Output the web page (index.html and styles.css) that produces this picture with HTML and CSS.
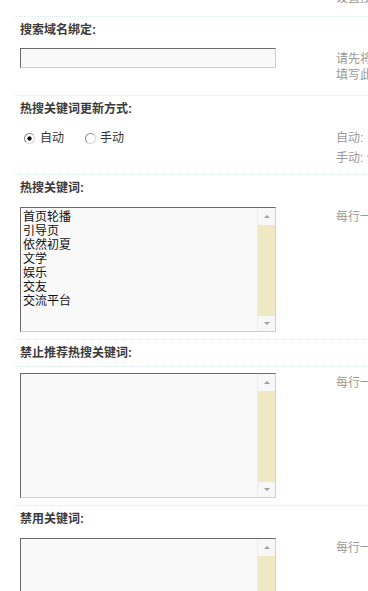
FILE: index.html
```html
<!DOCTYPE html>
<html lang="zh-CN">
<head>
<meta charset="utf-8">
<title>搜索设置</title>
<link rel="stylesheet" href="styles.css">
</head>
<body>
<div class="panel">
  <div class="row row-first">
    <div class="form-col"></div>
    <div class="tips tips-cut">设置搜索时间间隔，单位秒</div>
  </div>

  <div class="label-row">搜索域名绑定:</div>
  <div class="row row-input">
    <div class="form-col"><input class="txt" type="text"></div>
    <div class="tips tips-input">请先将搜索域名解析到服务器上，然后<br>填写此域名，不要包含 http://</div>
  </div>

  <div class="label-row">热搜关键词更新方式:</div>
  <div class="row row-radio">
    <div class="form-col">
      <label class="radio"><input type="radio" name="mode" checked>自动</label>
      <label class="radio"><input type="radio" name="mode">手动</label>
    </div>
    <div class="tips tips-radio">自动: 系统根据搜索频率自动更新<br>手动: 使用下方设置的热搜关键词</div>
  </div>

  <div class="label-row">热搜关键词:</div>
  <div class="row row-area">
    <div class="form-col">
      <div class="tarea">
        <textarea class="tarea-input">首页轮播
引导页
依然初夏
文学
娱乐
交友
交流平台</textarea>
        <div class="sbar"><div class="sbtn sbtn-up"><span class="arrow-up"></span></div><div class="strack"></div><div class="sbtn sbtn-down"><span class="arrow-down"></span></div></div>
      </div>
    </div>
    <div class="tips tips-area">每行一个关键词</div>
  </div>

  <div class="label-row">禁止推荐热搜关键词:</div>
  <div class="row row-area row-bordered">
    <div class="form-col">
      <div class="tarea">
        <textarea class="tarea-input"></textarea>
        <div class="sbar"><div class="sbtn sbtn-up"><span class="arrow-up"></span></div><div class="strack"></div><div class="sbtn sbtn-down"><span class="arrow-down"></span></div></div>
      </div>
    </div>
    <div class="tips tips-area">每行一个关键词</div>
  </div>

  <div class="label-row">禁用关键词:</div>
  <div class="row row-area">
    <div class="form-col">
      <div class="tarea">
        <textarea class="tarea-input"></textarea>
        <div class="sbar"><div class="sbtn sbtn-up"><span class="arrow-up"></span></div><div class="strack"></div><div class="sbtn sbtn-down"><span class="arrow-down"></span></div></div>
      </div>
    </div>
    <div class="tips tips-area">每行一个关键词</div>
  </div>
</div>
</body>
</html>
```

FILE: styles.css
```css
html, body {
  margin: 0;
  padding: 0;
  overflow: hidden;
  background: #fff;
}

.panel {
  margin-left: 15px;
  width: 640px;
  font-family: "Liberation Sans", "Noto Sans CJK SC", sans-serif;
  font-size: 12px;
  color: #333;
}

.label-row {
  border-top: 1px dotted #dde8ec;
  padding: 4px 5px;
  line-height: 18px;
  font-weight: bold;
  color: #3a3a3a;
}

.row {
  display: flex;
  align-items: flex-start;
  padding: 6px 5px 7px;
}

.form-col {
  width: 306px;
  flex: none;
}

.tips {
  padding-left: 10px;
  color: #999;
  line-height: 16px;
  white-space: nowrap;
}

.row-first {
  height: 16px;
  padding: 0 5px;
  box-sizing: border-box;
}

.tips-cut {
  margin-top: -10px;
}

.row-input {
  padding: 5px 5px 12px;
}

.tips-input {
  padding-top: 3px;
}

.txt {
  display: block;
  box-sizing: border-box;
  width: 256px;
  height: 20px;
  margin: 0;
  padding: 1px 3px;
  border: 1px solid;
  border-color: #6b6b6b #cfcfcf #cfcfcf #6b6b6b;
  background: #f9f9f9;
  font: 12px "Liberation Sans", "Noto Sans CJK SC", sans-serif;
  outline: none;
}

.row-radio {
  padding: 6px 5px 6px;
}

.row-radio .form-col {
  line-height: 18px;
  display: flex;
  align-items: center;
  padding-top: 1px;
}

.radio {
  display: inline-flex;
  align-items: center;
  color: #333;
  margin-right: 21px;
}

.radio input {
  appearance: none;
  -webkit-appearance: none;
  box-sizing: border-box;
  width: 11px;
  height: 11px;
  margin: 0 5px 0 4px;
  border: 1px solid;
  border-color: #8a8a8a #d8d8d8 #d8d8d8 #8a8a8a;
  border-radius: 50%;
  background: #fff;
}

.radio + .radio input {
  margin-left: 0;
  margin-right: 4px;
}

.radio input:checked {
  background: radial-gradient(circle, #000 0 1.8px, #fff 2.4px);
}

.tips-radio {
  line-height: 20px;
}

.row-bordered {
  border-top: 1px dotted #dde8ec;
}

.tips-area {
  padding-top: 2px;
}

.tarea {
  display: flex;
  box-sizing: border-box;
  width: 256px;
  height: 125px;
  border: 1px solid;
  border-color: #6b6b6b #cfcfcf #cfcfcf #6b6b6b;
  background: #f9f9f9;
}

.tarea-input {
  flex: 1;
  min-width: 0;
  margin: 0;
  padding: 1px 2px;
  border: 0;
  background: transparent;
  font-family: "Noto Sans CJK SC", sans-serif;
  font-size: 12px;
  line-height: 14px;
  color: #111;
  resize: none;
  overflow: hidden;
  outline: none;
}

.sbar {
  width: 17px;
  flex: none;
  display: flex;
  flex-direction: column;
  border-left: 1px solid #ececec;
}

.sbtn {
  display: flex;
  align-items: center;
  justify-content: center;
  background: #f7f7f7;
}

.sbtn-up {
  height: 17px;
}

.sbtn-down {
  height: 15px;
}

.strack {
  flex: 1;
  background: #f0e7c3;
}

.arrow-up {
  width: 0;
  height: 0;
  border-left: 3px solid transparent;
  border-right: 3px solid transparent;
  border-bottom: 3px solid #a0a0a0;
}

.arrow-down {
  width: 0;
  height: 0;
  border-left: 3px solid transparent;
  border-right: 3px solid transparent;
  border-top: 3px solid #a0a0a0;
}
```
